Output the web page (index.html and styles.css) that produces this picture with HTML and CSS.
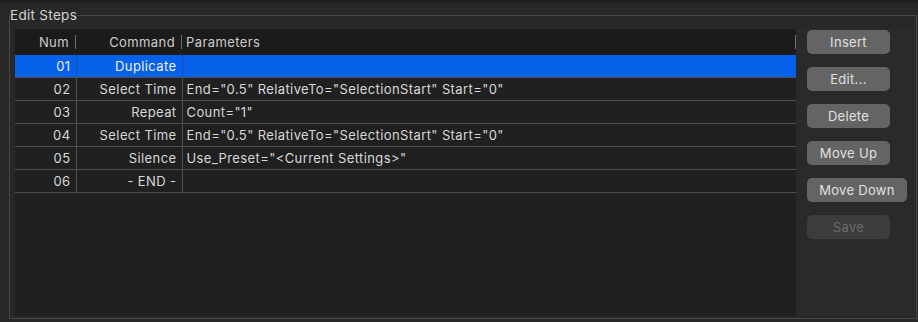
FILE: index.html
```html
<!DOCTYPE html>
<html>
<head>
<meta charset="utf-8">
<link rel="stylesheet" href="styles.css">
</head>
<body>
<div class="topbar"></div>
<fieldset class="group">
  <legend class="group-title">Edit Steps</legend>
  <div class="group-body">
    <div class="table-panel">
      <table class="steps">
        <colgroup>
          <col class="c-num">
          <col class="c-cmd">
          <col>
        </colgroup>
        <thead>
          <tr>
            <th class="num"><span class="hcell">Num</span></th>
            <th class="cmd"><span class="hcell">Command</span></th>
            <th class="par"><span class="hcell">Parameters</span></th>
          </tr>
        </thead>
        <tbody>
          <tr class="selected"><td class="num">01</td><td class="cmd">Duplicate</td><td class="par"></td></tr>
          <tr><td class="num">02</td><td class="cmd">Select Time</td><td class="par">End="0.5" RelativeTo="SelectionStart" Start="0"</td></tr>
          <tr><td class="num">03</td><td class="cmd">Repeat</td><td class="par">Count="1"</td></tr>
          <tr><td class="num">04</td><td class="cmd">Select Time</td><td class="par">End="0.5" RelativeTo="SelectionStart" Start="0"</td></tr>
          <tr><td class="num">05</td><td class="cmd">Silence</td><td class="par">Use_Preset="&lt;Current Settings&gt;"</td></tr>
          <tr><td class="num">06</td><td class="cmd">- END -</td><td class="par"></td></tr>
        </tbody>
      </table>
    </div>
    <div class="actions">
      <button class="btn">Insert</button>
      <button class="btn">Edit...</button>
      <button class="btn">Delete</button>
      <button class="btn">Move Up</button>
      <button class="btn wide">Move Down</button>
      <button class="btn" disabled>Save</button>
    </div>
  </div>
</fieldset>
</body>
</html>
```
FILE: styles.css
```css
html, body {
  margin: 0;
  padding: 0;
  background: #282828;
  width: 918px;
  height: 322px;
  overflow: hidden;
  font-family: Inter, "Noto Sans", sans-serif;
  font-size: 13px;
  color: #d6d6d6;
}

.topbar {
  height: 3px;
  background: #202020;
}

.group {
  margin: 4px 1px 0 9px;
  padding: 0;
  border: 1px solid #474747;
  height: 312px;
  box-sizing: border-box;
  min-width: 0;
}

.group-title {
  padding: 0;
  margin: 0;
  line-height: 16px;
  font-family: Inter, "Noto Sans", sans-serif;
  font-size: 13.5px;
  letter-spacing: 0.3px;
  color: #d4d4d4;
}

.group-body {
  display: flex;
  padding: 6px 0 2px 5px;
  height: 287px;
}

.table-panel {
  width: 781px;
  height: 287px;
  background: #202020;
}

.steps {
  width: 100%;
  border-collapse: collapse;
  table-layout: fixed;
  letter-spacing: 0.4px;
}

.c-num { width: 61px; }
.c-cmd { width: 106px; }

.steps th {
  background: #1b1b1b;
  height: 26px;
  padding: 0;
  font-weight: normal;
  color: #cbcbcb;
}

.hcell {
  display: block;
  height: 14px;
  line-height: 14px;
  border-right: 1px solid #6e6e6e;
  padding: 0 6px 0 4px;
}

.steps th.num .hcell { text-align: right; }
.steps th.cmd .hcell { text-align: right; padding-right: 6px; }
.steps th.par .hcell { text-align: left; }

.steps td {
  height: 22px;
  padding: 0 5px 0 4px;
  border-bottom: 1px solid #4f4f4f;
  border-right: 1px solid #4f4f4f;
  white-space: nowrap;
  color: #d8d8d8;
}

.steps td.num { text-align: right; }
.steps td.cmd { text-align: right; }
.steps td.par { text-align: left; border-right: none; }

.steps tr.selected td {
  background: #0560ea;
  color: #f0f0f0;
  border-right-color: #1d4fa0;
}

.actions {
  flex: 1;
  display: flex;
  flex-direction: column;
  align-items: flex-start;
  gap: 13px;
  padding: 1px 0 0 11px;
  background: #2a2a2a;
}

.btn {
  width: 83px;
  height: 24px;
  border: none;
  border-radius: 5px;
  background: #646464;
  color: #e0e0e0;
  font-family: Inter, "Noto Sans", sans-serif;
  font-size: 13px;
  letter-spacing: 0.3px;
  padding: 0;
}

.btn.wide {
  width: 100px;
}

.btn:disabled {
  background: #3c3c3c;
  color: #6c6c6c;
}
```
